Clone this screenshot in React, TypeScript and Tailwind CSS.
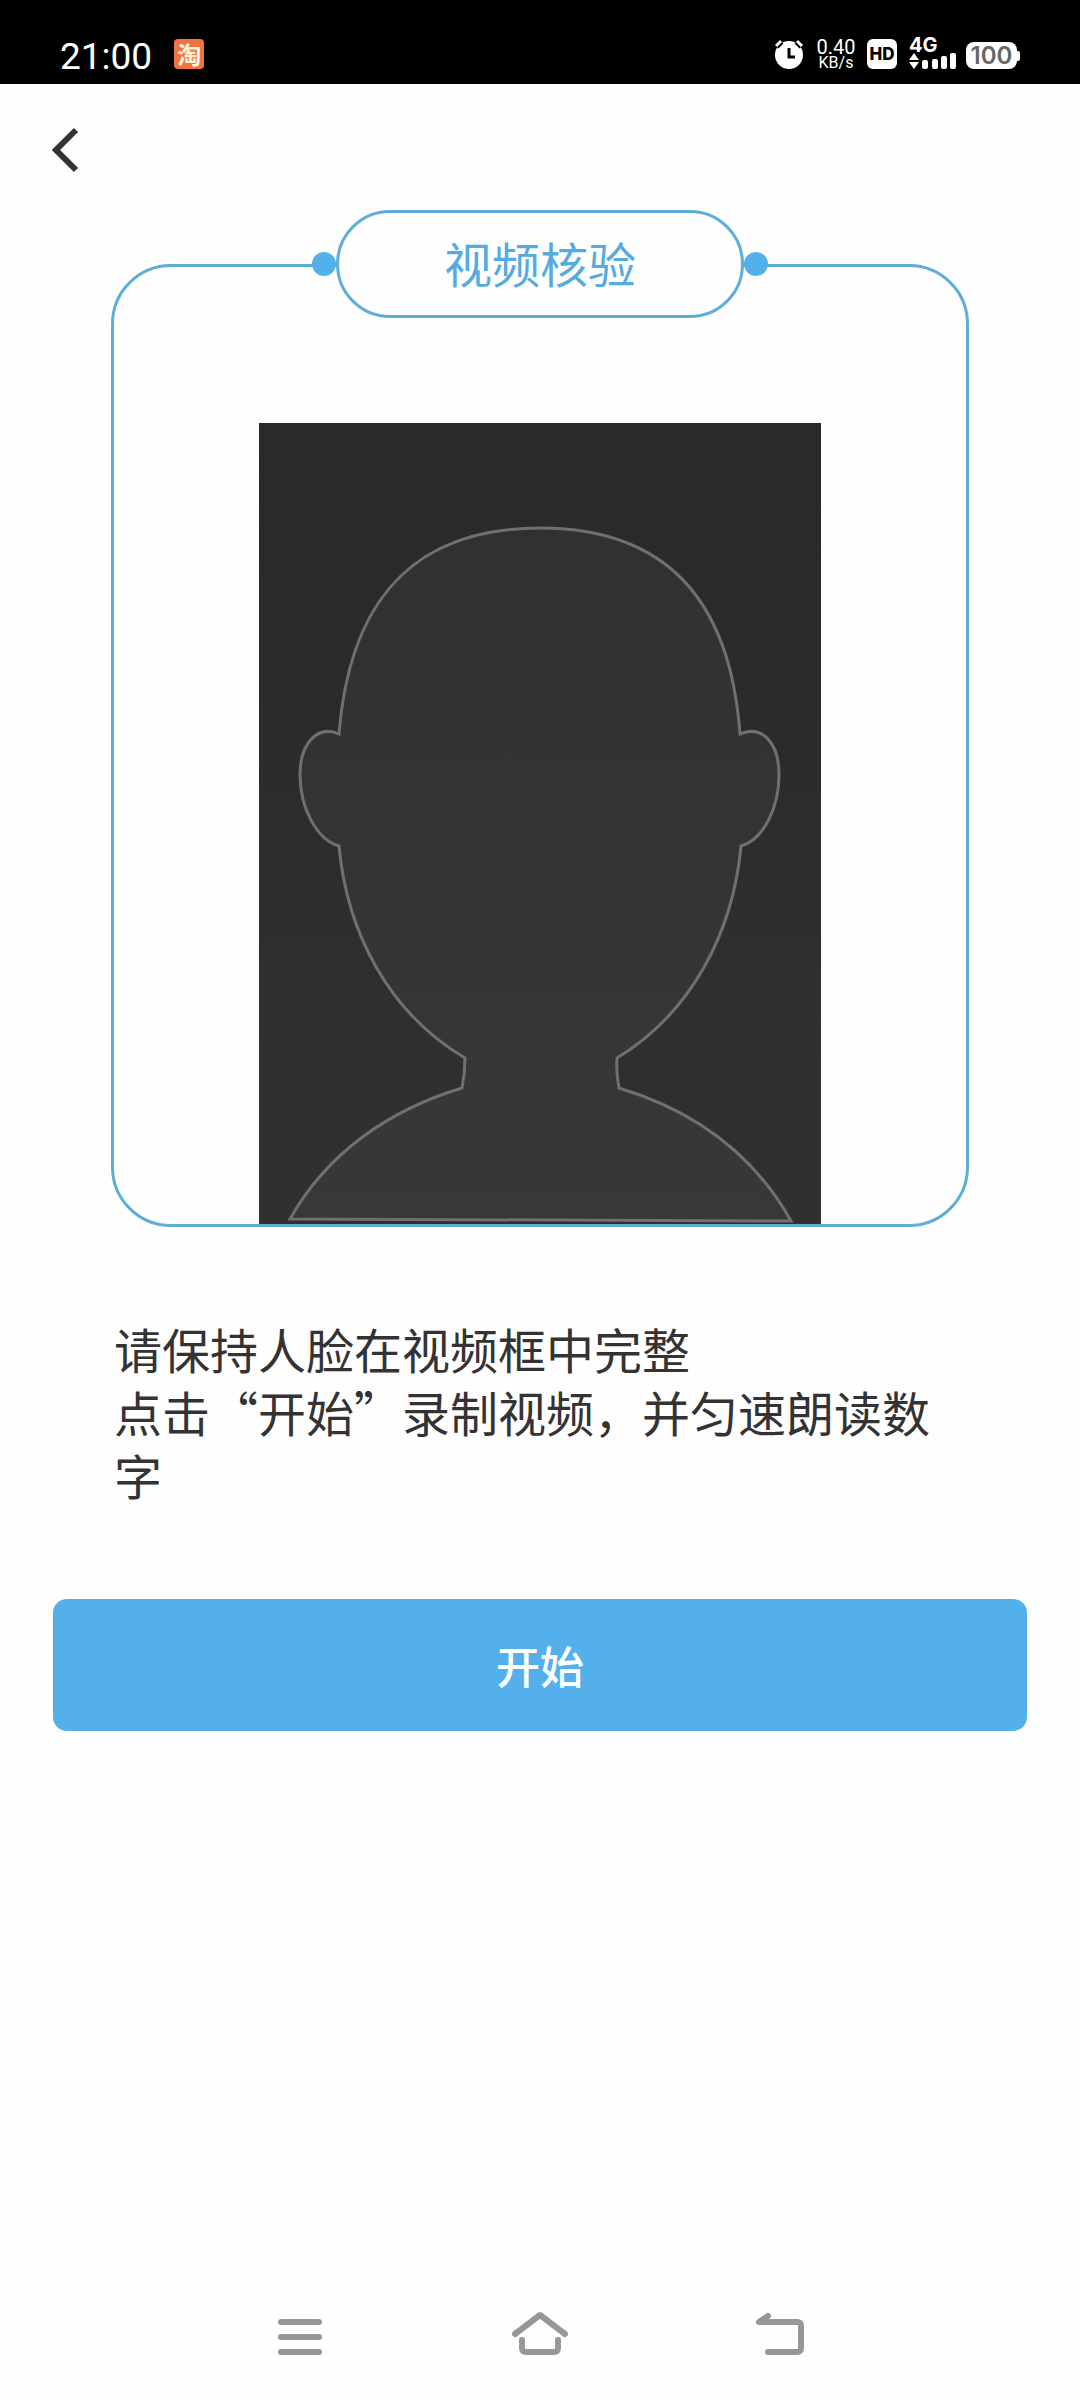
import React, { useState } from 'react';

const signalBars = ['h-[9px]', 'h-[10px]', 'h-[13px]', 'h-[16px]'];

function StatusBar() {
  return (
    <header className="flex h-[84px] items-end justify-between bg-black px-[60px] pb-[15px] text-white">
      <div className="flex items-end gap-[22px]">
        <span className="font-[Roboto,sans-serif] text-[37px] leading-6">21:00</span>
        <span className="flex h-[30px] w-[30px] items-center justify-center rounded-sm bg-[#ef7440] text-[24px] font-bold leading-none text-[#fff6e0]">
          淘
        </span>
      </div>
      <div className="flex h-[30px] items-end gap-3">
        <svg className="h-[30px] w-[30px]" viewBox="0 0 30 30" fill="none" aria-label="闹钟">
          <circle cx="14" cy="16" r="14" fill="#fff" />
          <path d="M1 7 6 2M27 7 22 2" stroke="#000" strokeWidth="7" />
          <path d="M1 7 6 2M27 7 22 2" stroke="#fff" strokeWidth="3" />
          <path d="M14 9v9H20" stroke="#000" strokeWidth="3" />
        </svg>
        <div className="flex w-[38px] flex-col items-center font-[Roboto,sans-serif]">
          <span className="text-[20px] leading-5">0.40</span>
          <span className="text-[16px] leading-3">KB/s</span>
        </div>
        <span className="flex h-[30px] w-[30px] items-center justify-center rounded-md bg-white font-[Inter,sans-serif] text-[17px] font-extrabold leading-none text-black">
          HD
        </span>
        <div className="flex items-end gap-[10px]">
          <div className="flex w-[47px] flex-col font-[Inter,sans-serif]">
            <span className="text-[20px] font-bold leading-4">4G</span>
            <div className="flex h-4 items-end justify-between">
              <svg className="h-4 w-[10px]" viewBox="0 0 10 16" fill="#fff" aria-hidden="true">
                <path d="M5 0 10 7H0zM5 16 10 9H0z" />
              </svg>
              {signalBars.map((height) => (
                <span key={height} className={`w-[6px] rounded-xs bg-white ${height}`} />
              ))}
            </div>
          </div>
          <div className="flex items-center">
            <span className="flex h-[27px] w-[51px] items-center justify-center rounded-lg bg-white pt-px font-[Inter,sans-serif] text-[24px] font-semibold leading-none text-[#666]">
              100
            </span>
            <span className="h-[10px] w-[3px] rounded-r-xs bg-white" />
          </div>
        </div>
      </div>
    </header>
  );
}

function FaceGuide() {
  return (
    <svg className="mx-auto block w-[562px] max-w-full" viewBox="0 0 562 801" role="img" aria-label="人脸取景框">
      <defs>
        <linearGradient id="backdrop" x1="0" y1="0" x2="0" y2="1">
          <stop offset="0" stopColor="#2a2a2a" />
          <stop offset="0.4" stopColor="#2b2b2b" />
          <stop offset="0.7" stopColor="#2f2f2f" />
          <stop offset="1" stopColor="#303031" />
        </linearGradient>
        <linearGradient id="person" x1="0" y1="0" x2="0" y2="1">
          <stop offset="0" stopColor="#313131" />
          <stop offset="0.5" stopColor="#343434" />
          <stop offset="1" stopColor="#383838" />
        </linearGradient>
      </defs>
      <rect width="562" height="801" fill="url(#backdrop)" />
      <path
        d="M281 105C170 105 92 160 80 311C60 302 41 318 41 352C41 385 58 417 80 423C88 510 130 590 206 635Q206 650 203 665C130 687 68 730 31 796L532 798C494 730 433 687 360 665Q357 650 358 635C432 590 474 510 482 423C504 417 520 385 520 352C520 318 502 302 481 311C470 160 392 105 281 105Z"
        fill="url(#person)"
        stroke="#707070"
        strokeWidth="3"
      />
    </svg>
  );
}

function NavBar() {
  return (
    <nav className="mt-auto flex h-[126px] items-center justify-center text-[#979797]">
      <button type="button" aria-label="最近任务" className="flex w-60 justify-center">
        <svg className="h-[60px] w-[60px]" viewBox="0 0 60 60" fill="none" stroke="currentColor" strokeWidth="6" strokeLinecap="round">
          <path d="M11 15h38M11 30h38M11 45h38" />
        </svg>
      </button>
      <button type="button" aria-label="主屏幕" className="flex w-60 justify-center">
        <svg className="h-[60px] w-[60px]" viewBox="0 0 60 60" fill="none" stroke="currentColor" strokeWidth="6" strokeLinecap="round" strokeLinejoin="round">
          <path d="M5 27 30 8l25 19" />
          <path d="M12 33v8q0 4 4 4h28q4 0 4-4v-8" />
        </svg>
      </button>
      <button type="button" aria-label="返回" className="flex w-60 justify-center">
        <svg className="h-[60px] w-[60px]" viewBox="0 0 60 60" fill="none" stroke="currentColor" strokeWidth="6" strokeLinecap="round" strokeLinejoin="round">
          <path d="M18 9 9 15h38q4 0 4 4v22q0 4-4 4H18" />
          <path d="M9 15 18 9v6z" fill="currentColor" stroke="none" />
        </svg>
      </button>
    </nav>
  );
}

export default function VideoVerification() {
  const [recording, setRecording] = useState(false);

  return (
    <div className="flex min-h-screen flex-col bg-[#fefefe] font-['Noto_Sans_CJK_SC',sans-serif]">
      <StatusBar />
      <main className="flex flex-col">
        <div className="flex h-[126px] items-center px-10 pt-[6px]">
          <button type="button" aria-label="返回上一页" className="p-2">
            <svg className="h-12 w-[34px]" viewBox="0 0 34 48" fill="none" stroke="#333" strokeWidth="6">
              <path d="M28 4 8 24l20 20" />
            </svg>
          </button>
        </div>

        {/* Title pill sits on the top edge of the frame */}
        <div className="relative z-10 -mb-[54px] flex items-center justify-center">
          <span className="h-6 w-6 rounded-full bg-[#54b0ea]" />
          <h1 className="flex h-[108px] w-[408px] items-center justify-center rounded-full border-[3px] border-[#5eaed8] bg-[#fefefe] pb-1 text-5xl text-[#54abe0]">
            视频核验
          </h1>
          <span className="h-6 w-6 rounded-full bg-[#54b0ea]" />
        </div>
        <section className="mx-[111px] overflow-hidden rounded-[60px] border-[3px] border-[#5eaed8] pt-[156px]">
          <FaceGuide />
        </section>

        <p className="mx-[114px] mt-[90px] text-[48px] leading-[63px] text-[#333]">
          请保持人脸在视频框中完整
          <br />
          点击“开始”录制视频，并匀速朗读数字
        </p>
        <button
          type="button"
          onClick={() => setRecording(true)}
          aria-pressed={recording}
          className="mx-[53px] mt-[93px] h-[132px] rounded-[14px] bg-[#54b0ea] text-[44px] font-medium text-white"
        >
          开始
        </button>
      </main>
      <NavBar />
    </div>
  );
}
